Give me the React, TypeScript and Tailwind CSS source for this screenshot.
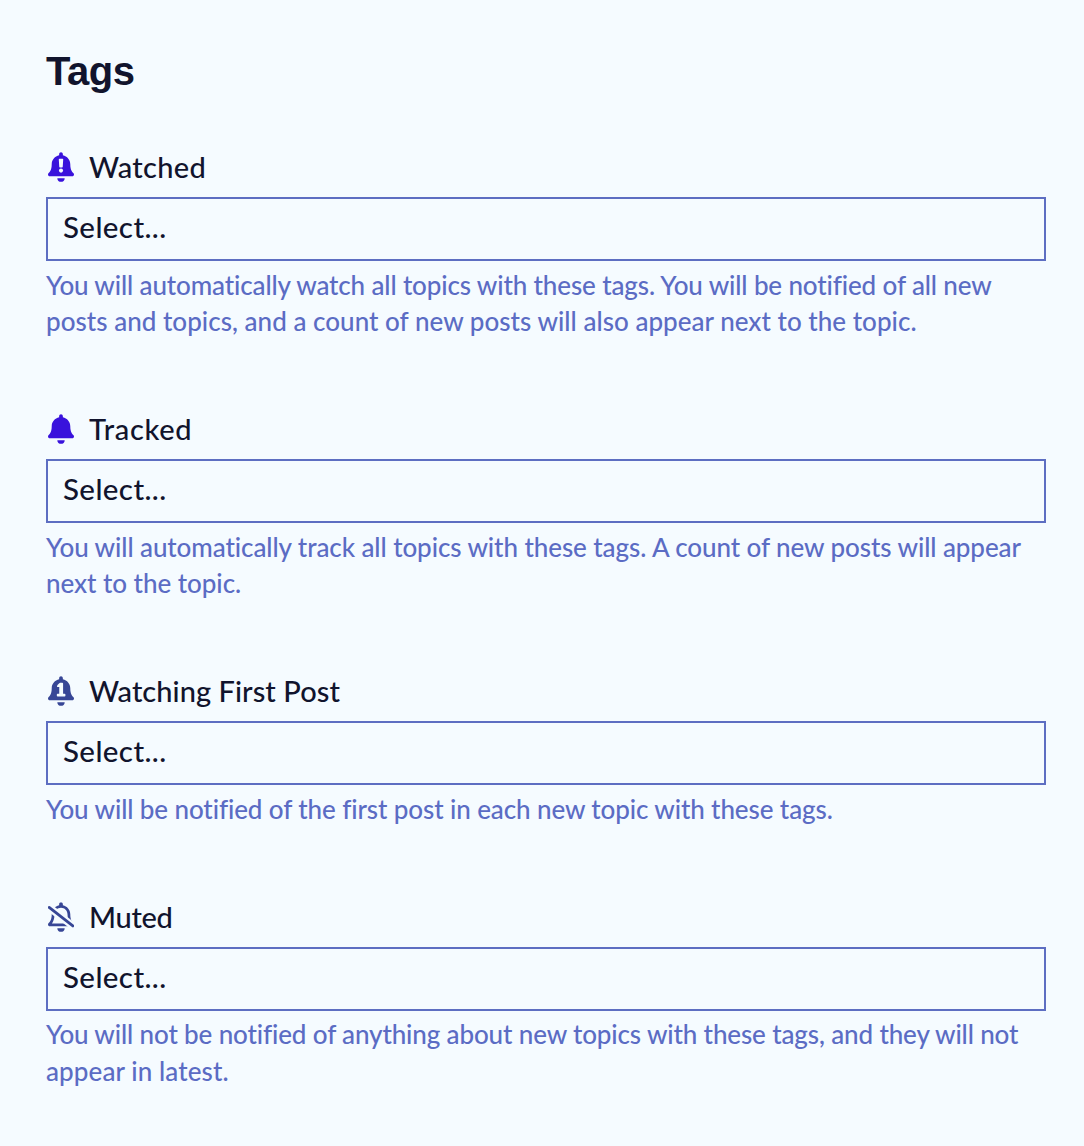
import type { ReactNode } from "react";

const CLAPPER = "M224 512c35.32 0 63.97-28.65 63.97-64H160.03c0 35.35 28.65 64 63.97 64z";
const BODY =
  "M439.39 362.29c-19.32-20.76-55.47-51.99-55.47-154.29 0-77.7-54.48-139.9-127.94-155.16V32c0-17.67-14.32-32-31.98-32s-31.98 14.33-31.98 32v20.84C118.56 68.1 64.08 130.3 64.08 208c0 102.3-36.15 133.53-55.47 154.29-6 6.45-8.66 14.16-8.61 21.71.11 16.4 12.98 32 32.1 32h383.8c19.12 0 32-15.6 32.1-32 .05-7.55-2.61-15.27-8.61-21.71z";
const INNER =
  "M67.53 368c21.22-27.97 44.42-74.33 44.53-159.42 0-.2-.06-.38-.06-.58 0-61.86 50.14-112 112-112s112 50.14 112 112c0 .2-.06.38-.06.58.11 85.1 23.31 131.46 44.53 159.42H67.53z";

function Icon({ className, children }: { className: string; children: ReactNode }) {
  return (
    <svg viewBox="0 0 448 512" fill="currentColor" className={`h-[30px] w-[26px] shrink-0 ${className}`}>
      {children}
    </svg>
  );
}

function WatchingIcon() {
  return (
    <Icon className="text-[#3912dc]">
      <path d={BODY} />
      <path d={CLAPPER} />
      <path
        className="text-[#f5fbff]"
        d="M198 112h52q13 0 12 13l-8 127q-1 12-12 12h-36q-11 0-12-12l-8-127q-1-13 12-13z"
      />
      <circle className="text-[#f5fbff]" cx="224" cy="318" r="35" />
    </Icon>
  );
}

function TrackingIcon() {
  return (
    <Icon className="text-[#3912dc]">
      <path d={BODY} />
      <path d={CLAPPER} />
    </Icon>
  );
}

function FirstPostIcon() {
  return (
    <Icon className="text-[#374696]">
      <path d={BODY} />
      <path d={CLAPPER} />
      <path
        className="text-[#f5fbff]"
        d="M208 114h38q14 0 14 14v174h26q14 0 14 14v20q0 14-14 14H166q-14 0-14-14v-20q0-14 14-14h28V188h-26q-16 0-12-16l4-12q2-6 8-10l26-28q6-8 14-8z"
      />
    </Icon>
  );
}

function MutedIcon() {
  return (
    <Icon className="text-[#374696]">
      <mask id="bell-gap">
        <rect width="448" height="512" fill="white" />
        <path d="M-100 -5L550 506" stroke="black" strokeWidth="128" />
      </mask>
      <g mask="url(#bell-gap)">
        <path fillRule="evenodd" d={BODY + INNER} />
      </g>
      <path d={CLAPPER} />
      <path d="M20 90L428 410" stroke="currentColor" strokeWidth="48" strokeLinecap="round" />
    </Icon>
  );
}

type Line = { text: string; tracking: string };

const sections: { label: string; labelTracking: string; icon: ReactNode; lines: Line[] }[] = [
  {
    label: "Watched",
    labelTracking: "tracking-[0.3px]",
    icon: <WatchingIcon />,
    lines: [
      { text: "You will automatically watch all topics with these tags. You will be notified of all new", tracking: "tracking-[-0.13px]" },
      { text: "posts and topics, and a count of new posts will also appear next to the topic.", tracking: "tracking-[0.03px]" },
    ],
  },
  {
    label: "Tracked",
    labelTracking: "tracking-[0.65px]",
    icon: <TrackingIcon />,
    lines: [
      { text: "You will automatically track all topics with these tags. A count of new posts will appear", tracking: "tracking-[-0.08px]" },
      { text: "next to the topic.", tracking: "tracking-[-0.04px]" },
    ],
  },
  {
    label: "Watching First Post",
    labelTracking: "tracking-[0.06px]",
    icon: <FirstPostIcon />,
    lines: [
      { text: "You will be notified of the first post in each new topic with these tags.", tracking: "tracking-[-0.1px]" },
    ],
  },
  {
    label: "Muted",
    labelTracking: "tracking-[-0.3px]",
    icon: <MutedIcon />,
    lines: [
      { text: "You will not be notified of anything about new topics with these tags, and they will not", tracking: "tracking-[-0.13px]" },
      { text: "appear in latest.", tracking: "tracking-[0.1px]" },
    ],
  },
];

export default function App() {
  return (
    <main className="min-h-screen bg-[#f5fbff] pt-[46px] pr-[38px] pl-[46px] font-['Lato',sans-serif] font-medium text-[#11142d]">
      <h2 className="mb-[53px] font-['Liberation_Sans',sans-serif] text-[40px] leading-[50px] font-bold tracking-[-0.5px]">
        Tags
      </h2>
      {sections.map((s) => (
        <section key={s.label} className="mb-[71.5px]">
          <div className="mb-3 flex h-9 items-center pl-0.5">
            {s.icon}
            <span className={`ml-[15px] text-[29px] leading-9 whitespace-nowrap ${s.labelTracking}`}>{s.label}</span>
          </div>
          <div className="flex h-16 items-center border-2 border-[#5d6ec2] px-[15px] pb-1 text-[29.5px] leading-9 tracking-[0.4px]">
            Select...
          </div>
          <p className="mt-[5.7px] text-[26px] leading-[36.4px] text-[#5b6cc4]">
            {s.lines.map((l) => (
              <span key={l.text} className={`block whitespace-nowrap ${l.tracking}`}>
                {l.text}
              </span>
            ))}
          </p>
        </section>
      ))}
    </main>
  );
}
